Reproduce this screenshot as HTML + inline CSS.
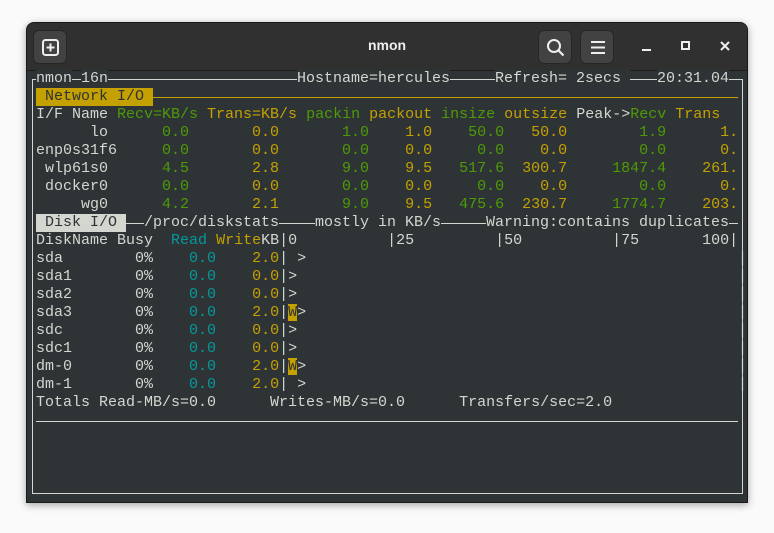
<!DOCTYPE html>
<html><head><meta charset="utf-8"><style>
*{margin:0;padding:0;box-sizing:border-box}
body{width:774px;height:533px;background:#fafafa;position:relative;overflow:hidden;font-family:"Liberation Mono",monospace}
.win{position:absolute;left:26px;top:22px;width:722px;height:481px;background:#2e3436;border-radius:8px 8px 0 0;box-shadow:0 2px 8px rgba(0,0,0,.35);overflow:hidden;border:1px solid #1a1a1a}
.tb{position:absolute;left:0;top:0;width:100%;height:48px;background:#303030;border-bottom:1px solid #1c1c1c}
.btn{position:absolute;top:7px;width:34px;height:34px;background:#424242;border-radius:6px;border:1px solid #262626}
.title{position:absolute;left:0;width:100%;top:14px;text-align:center;color:#eee;font:bold 14px "Liberation Sans",sans-serif}
.r{position:absolute;left:36px;font-size:15px;line-height:18px;height:18px;white-space:pre;color:#d3d7cf}
.a{position:absolute;font-size:15px;line-height:18px;white-space:pre;color:#d3d7cf;background:#2e3436}
.g{color:#4e9a06}.y{color:#c4a000}.c{color:#06989a}
.h{position:absolute;height:1px;background:#d3d7cf}
.v{position:absolute;width:1px;background:#d3d7cf}
.W{background:#c4a000;color:#2e3436}
</style></head><body>
<div class="win">
<div class="tb">
<div class="btn" style="left:6px"><svg width="34" height="34" viewBox="0 0 34 34"><rect x="9" y="9" width="15" height="15" rx="2.5" fill="none" stroke="#eee" stroke-width="2"/><path d="M16.5 12.5v8M12.5 16.5h8" stroke="#eee" stroke-width="2"/></svg></div>
<div class="title">nmon</div>
<div class="btn" style="left:511px"><svg width="34" height="34" viewBox="0 0 34 34"><circle cx="15" cy="15" r="6" fill="none" stroke="#eee" stroke-width="2"/><path d="M19.5 19.5l5 5" stroke="#eee" stroke-width="2.2"/></svg></div>
<div class="btn" style="left:553px"><svg width="34" height="34" viewBox="0 0 34 34"><path d="M10 11h14M10 16.5h14M10 22h14" stroke="#eee" stroke-width="2"/></svg></div>
<div style="position:absolute;left:615px;top:26px;width:9px;height:2px;background:#eee"></div>
<div style="position:absolute;left:654px;top:18px;width:9px;height:9px;border:2px solid #eee"></div>
<svg style="position:absolute;left:693px;top:18px" width="10" height="10"><path d="M1 1l8 8M9 1l-8 8" stroke="#eee" stroke-width="2"/></svg>
</div>
</div>
<!-- frame -->
<div class="h" style="left:32px;top:79px;width:711px"></div>
<div class="v" style="left:32px;top:79px;height:415px"></div>
<div class="v" style="left:742px;top:79px;height:415px"></div>
<div class="h" style="left:32px;top:493px;width:711px"></div>
<div class="a" style="left:36px;top:70px">nmon</div>
<div class="a" style="left:81px;top:70px">16n</div>
<div class="a" style="left:297px;top:70px">Hostname=hercules</div>
<div class="a" style="left:495px;top:70px">Refresh= 2secs </div>
<div class="a" style="left:657px;top:70px">20:31.04</div>
<!-- network -->
<div class="h" style="left:153px;top:97px;width:585px;background:#c4a000"></div>
<div class="a" style="left:36px;top:88px;background:#c4a000;color:#2e3436"> Network I/O </div>
<div class="r" style="top:106px">I/F Name <span class="g">Recv=KB/s</span> <span class="y">Trans=KB/s</span> <span class="g">packin</span> <span class="y">packout</span> <span class="g">insize</span> <span class="y">outsize</span> Peak-&gt;<span class="g">Recv</span> <span class="y">Trans</span></div>
<div class="r" style="top:124px">      lo<span class="g">      0.0</span><span class="y">       0.0</span><span class="g">       1.0</span><span class="y">    1.0</span><span class="g">    50.0</span><span class="y">   50.0</span><span class="g">        1.9</span><span class="y">      1.</span></div>
<div class="r" style="top:142px">enp0s31f6<span class="g">     0.0</span><span class="y">       0.0</span><span class="g">       0.0</span><span class="y">    0.0</span><span class="g">     0.0</span><span class="y">    0.0</span><span class="g">        0.0</span><span class="y">      0.</span></div>
<div class="r" style="top:160px"> wlp61s0<span class="g">      4.5</span><span class="y">       2.8</span><span class="g">       9.0</span><span class="y">    9.5</span><span class="g">   517.6</span><span class="y">  300.7</span><span class="g">     1847.4</span><span class="y">    261.</span></div>
<div class="r" style="top:178px"> docker0<span class="g">      0.0</span><span class="y">       0.0</span><span class="g">       0.0</span><span class="y">    0.0</span><span class="g">     0.0</span><span class="y">    0.0</span><span class="g">        0.0</span><span class="y">      0.</span></div>
<div class="r" style="top:196px">     wg0<span class="g">      4.2</span><span class="y">       2.1</span><span class="g">       9.0</span><span class="y">    9.5</span><span class="g">   475.6</span><span class="y">  230.7</span><span class="g">     1774.7</span><span class="y">    203.</span></div>
<!-- disk -->
<div class="h" style="left:126px;top:223px;width:612px"></div>
<div class="a" style="left:36px;top:214px;background:#d3d7cf;color:#2e3436"> Disk I/O </div>
<div class="a" style="left:144px;top:214px">/proc/diskstats</div>
<div class="a" style="left:315px;top:214px">mostly in KB/s</div>
<div class="a" style="left:486px;top:214px">Warning:contains duplicates</div>
<div class="r" style="top:232px">DiskName Busy  <span class="c">Read</span> <span class="y">Write</span>KB|0          |25         |50          |75       100|</div>
<div class="r" style="top:250px">sda        0%    <span class="c">0.0</span>    <span class="y">2.0</span>| &gt;</div>
<div class="r" style="top:268px">sda1       0%    <span class="c">0.0</span>    <span class="y">0.0</span>|&gt;</div>
<div class="r" style="top:286px">sda2       0%    <span class="c">0.0</span>    <span class="y">0.0</span>|&gt;</div>
<div class="r" style="top:304px">sda3       0%    <span class="c">0.0</span>    <span class="y">2.0</span>|<span class="W">W</span>&gt;</div>
<div class="r" style="top:322px">sdc        0%    <span class="c">0.0</span>    <span class="y">0.0</span>|&gt;</div>
<div class="r" style="top:340px">sdc1       0%    <span class="c">0.0</span>    <span class="y">0.0</span>|&gt;</div>
<div class="r" style="top:358px">dm-0       0%    <span class="c">0.0</span>    <span class="y">2.0</span>|<span class="W">W</span>&gt;</div>
<div class="r" style="top:376px">dm-1       0%    <span class="c">0.0</span>    <span class="y">2.0</span>| &gt;</div>
<div class="a" style="left:729px;top:250px;background:none"> |</div>
<div class="a" style="left:729px;top:268px;background:none"> |</div>
<div class="a" style="left:729px;top:286px;background:none"> |</div>
<div class="a" style="left:729px;top:304px;background:none"> |</div>
<div class="a" style="left:729px;top:322px;background:none"> |</div>
<div class="a" style="left:729px;top:340px;background:none"> |</div>
<div class="a" style="left:729px;top:358px;background:none"> |</div>
<div class="a" style="left:729px;top:376px;background:none"> |</div>
<div class="r" style="top:394px">Totals Read-MB/s=0.0      Writes-MB/s=0.0      Transfers/sec=2.0</div>
<div class="h" style="left:36px;top:421px;width:702px"></div>
</body></html>
